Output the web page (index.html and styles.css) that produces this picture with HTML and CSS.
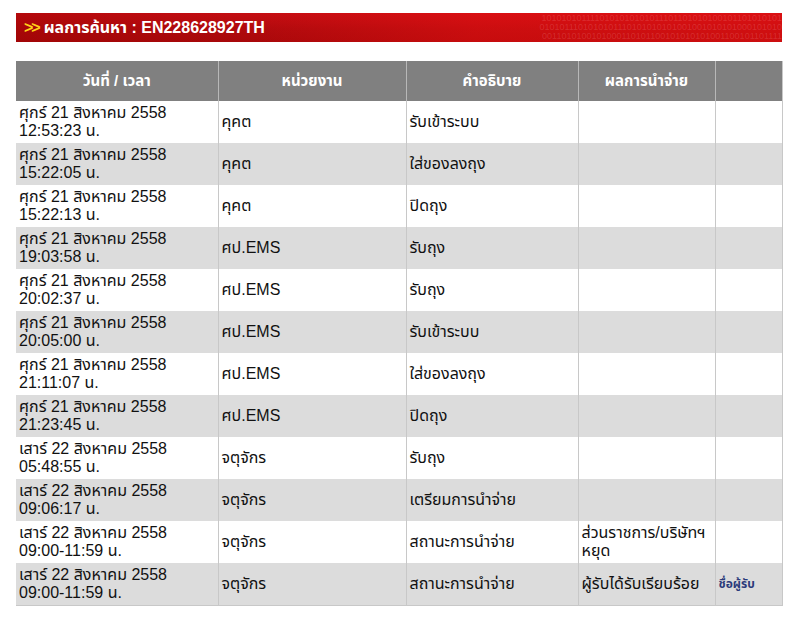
FILE: index.html
```html
<!DOCTYPE html>
<html lang="th">
<head>
<meta charset="utf-8">
<title>ผลการค้นหา</title>
<link rel="stylesheet" href="styles.css">
</head>
<body>
<div class="page">
  <div class="banner">
    <span class="arrows">&gt;&gt;</span>
    <span class="title">ผลการค้นหา : EN228628927TH</span>
    <div class="binary" aria-hidden="true">
      <span>1010101011110101010101011101101010100101101010101</span>
      <span>0101011101010101110101010101001001010101000101010</span>
      <span>0011010100101000110101100101010101001100101101111</span>
    </div>
  </div>
  <table class="track">
    <colgroup>
      <col class="c1"><col class="c2"><col class="c3"><col class="c4"><col class="c5">
    </colgroup>
    <thead>
      <tr><th>วันที่ / เวลา</th><th>หน่วยงาน</th><th>คำอธิบาย</th><th>ผลการนำจ่าย</th><th></th></tr>
    </thead>
    <tbody>
      <tr><td>ศุกร์ 21 สิงหาคม 2558<br>12:53:23 น.</td><td>คุคต</td><td>รับเข้าระบบ</td><td></td><td></td></tr>
      <tr><td>ศุกร์ 21 สิงหาคม 2558<br>15:22:05 น.</td><td>คุคต</td><td>ใส่ของลงถุง</td><td></td><td></td></tr>
      <tr><td>ศุกร์ 21 สิงหาคม 2558<br>15:22:13 น.</td><td>คุคต</td><td>ปิดถุง</td><td></td><td></td></tr>
      <tr><td>ศุกร์ 21 สิงหาคม 2558<br>19:03:58 น.</td><td>ศป.EMS</td><td>รับถุง</td><td></td><td></td></tr>
      <tr><td>ศุกร์ 21 สิงหาคม 2558<br>20:02:37 น.</td><td>ศป.EMS</td><td>รับถุง</td><td></td><td></td></tr>
      <tr><td>ศุกร์ 21 สิงหาคม 2558<br>20:05:00 น.</td><td>ศป.EMS</td><td>รับเข้าระบบ</td><td></td><td></td></tr>
      <tr><td>ศุกร์ 21 สิงหาคม 2558<br>21:11:07 น.</td><td>ศป.EMS</td><td>ใส่ของลงถุง</td><td></td><td></td></tr>
      <tr><td>ศุกร์ 21 สิงหาคม 2558<br>21:23:45 น.</td><td>ศป.EMS</td><td>ปิดถุง</td><td></td><td></td></tr>
      <tr><td>เสาร์ 22 สิงหาคม 2558<br>05:48:55 น.</td><td>จตุจักร</td><td>รับถุง</td><td></td><td></td></tr>
      <tr><td>เสาร์ 22 สิงหาคม 2558<br>09:06:17 น.</td><td>จตุจักร</td><td>เตรียมการนำจ่าย</td><td></td><td></td></tr>
      <tr><td>เสาร์ 22 สิงหาคม 2558<br>09:00-11:59 น.</td><td>จตุจักร</td><td>สถานะการนำจ่าย</td><td>ส่วนราชการ/บริษัทฯ<br>หยุด</td><td></td></tr>
      <tr><td>เสาร์ 22 สิงหาคม 2558<br>09:00-11:59 น.</td><td>จตุจักร</td><td>สถานะการนำจ่าย</td><td>ผู้รับได้รับเรียบร้อย</td><td><a class="recv" href="#">ชื่อผู้รับ</a></td></tr>
    </tbody>
  </table>
</div>
</body>
</html>
```
FILE: styles.css
```css
html, body {
  margin: 0;
  padding: 0;
  background: #ffffff;
}
body {
  font-family: "Liberation Sans", Tahoma, "Noto Sans Thai", "DejaVu Sans", sans-serif;
  color: #111;
}
.page {
  padding: 13px 18px 0 16px;
}
.banner {
  position: relative;
  height: 29px;
  display: flex;
  align-items: center;
  gap: 5px;
  padding-left: 8px;
  background: linear-gradient(to bottom, #c40d12 0%, #b00a0d 55%, #a8080a 100%);
  overflow: hidden;
}
.banner::before {
  content: "";
  position: absolute;
  inset: 0;
  background: linear-gradient(to right, rgba(150,0,0,0.35) 0%, rgba(0,0,0,0) 30%, rgba(255,20,20,0.35) 60%, rgba(240,20,20,0.5) 100%);
}
.arrows {
  position: relative;
  color: #ffd21a;
  font-weight: bold;
  font-size: 16px;
  letter-spacing: -2px;
  z-index: 1;
}
.title {
  position: relative;
  color: #ffffff;
  font-weight: bold;
  font-size: 16px;
  letter-spacing: 0;
  z-index: 1;
}
.binary {
  position: absolute;
  right: 0;
  top: 1px;
  width: 250px;
  display: flex;
  flex-direction: column;
  font-family: "Liberation Sans", sans-serif;
  font-size: 9px;
  line-height: 9px;
  color: rgba(255, 190, 190, 0.18);
  white-space: nowrap;
  overflow: hidden;
  text-align: right;
}
.track {
  margin-top: 19px;
  width: 766px;
  border-collapse: collapse;
  table-layout: fixed;
  font-size: 16px;
}
.c1 { width: 202px; }
.c2 { width: 188px; }
.c3 { width: 172px; }
.c4 { width: 137px; }
.c5 { width: 67px; }
.track th {
  background: #808080;
  color: #fff;
  font-weight: bold;
  font-size: 15px;
  height: 40px;
  padding: 0;
  text-align: center;
  border-left: 1px solid #b8b8b8;
  border-right: 1px solid #b8b8b8;
}
.track td {
  height: 42px;
  padding: 0 3px;
  line-height: 18px;
  vertical-align: middle;
  border-left: 1px solid #c8c8c8;
  border-right: 1px solid #c8c8c8;
  box-sizing: border-box;
}
.track th:first-child, .track td:first-child { border-left: none; }
.track th:last-child, .track td:last-child { border-right: 1px solid #c8c8c8; }
.track tbody tr:nth-child(even) td {
  background: #dcdcdc;
}
.track tbody tr:last-child td {
  border-bottom: 1px solid #c8c8c8;
}
.recv {
  color: #2b3a7a;
  font-weight: bold;
  font-size: 12px;
  text-decoration: none;
}
```
